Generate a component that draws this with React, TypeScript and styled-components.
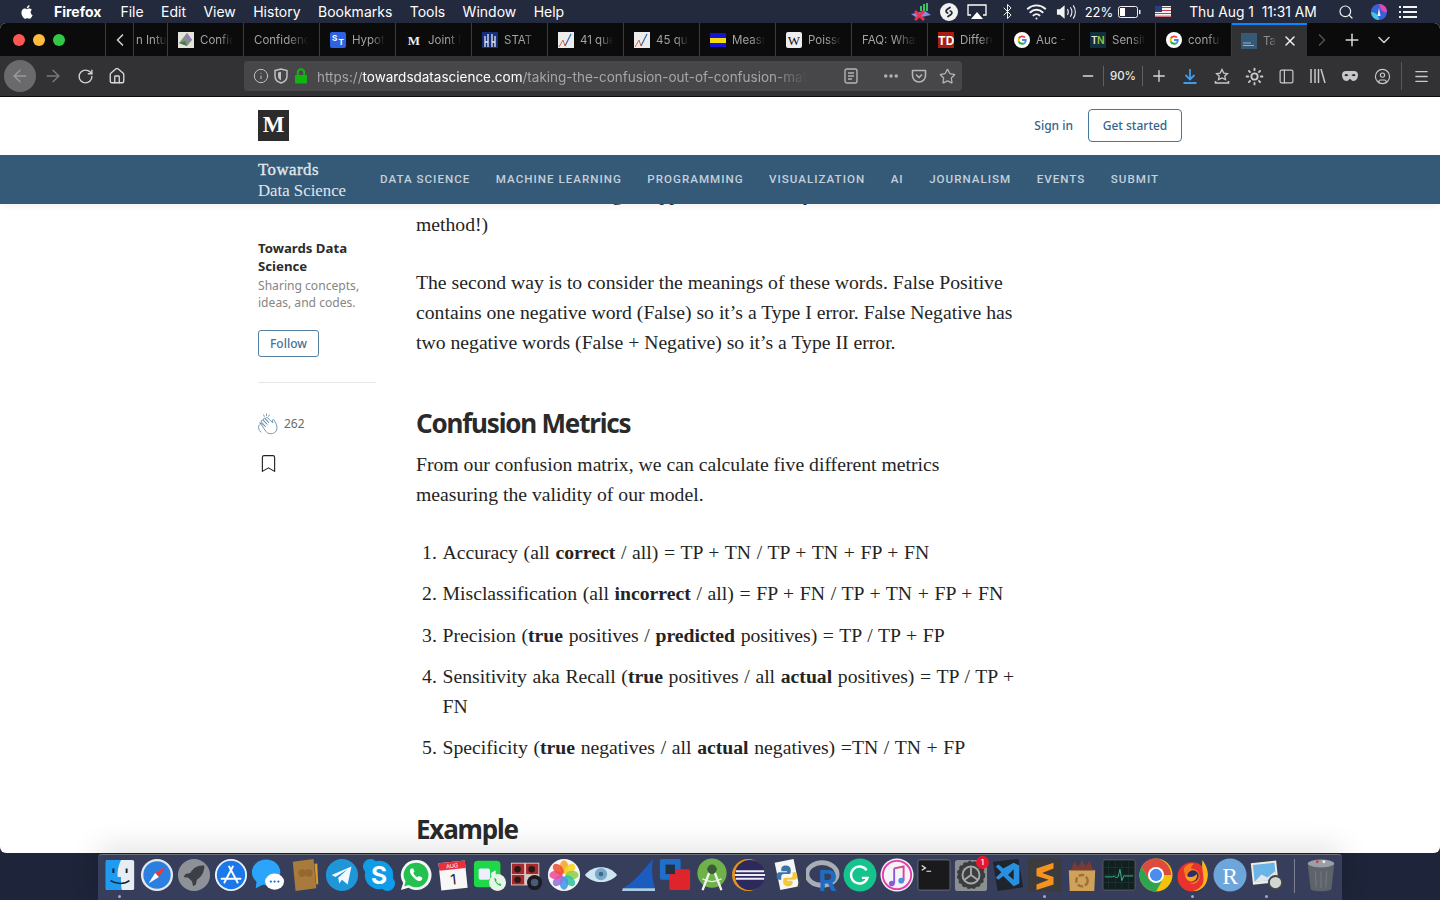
import type { ReactNode } from 'react';
import styled, { createGlobalStyle } from 'styled-components';
import {
    ArrowLeft,
    ArrowRight,
    Bluetooth,
    Bookmark,
    ChevronDown,
    ChevronLeft,
    ChevronRight,
    CircleUser,
    Ellipsis,
    House,
    Info,
    Menu,
    Minus,
    PanelLeft,
    Plus,
    RotateCw,
    Search,
    Star,
    Sun,
    Wifi,
    X,
} from 'lucide-react';

const uiFont = `Inter, "Liberation Sans", sans-serif`;
const mediumFont = `"Noto Sans", "Open Sans", sans-serif`;
const bodyFont = `"Liberation Serif", "DejaVu Serif", serif`;

const GlobalStyle = createGlobalStyle`
    html, body {
        margin: 0;
        padding: 0;
        background: #1e2439;
    }
    * {
        box-sizing: border-box;
    }
`;

const menuItems = ['File', 'Edit', 'View', 'History', 'Bookmarks', 'Tools', 'Window', 'Help'];
const navItems = ['Data Science', 'Machine Learning', 'Programming', 'Visualization', 'AI', 'Journalism', 'Events', 'Submit'];

const tabs: { title: string; icon?: string }[] = [
    { title: 'Confidence', icon: 'prism' },
    { title: 'Confidence Interval' },
    { title: 'Hypothesis', icon: 'st' },
    { title: 'Joint Prob', icon: 'medium' },
    { title: 'STAT 1', icon: 'stat' },
    { title: '41 questions', icon: 'chart' },
    { title: '45 questions', icon: 'chart' },
    { title: 'Measure', icon: 'flag' },
    { title: 'Poisson', icon: 'wiki' },
    { title: 'FAQ: What is' },
    { title: 'Difference', icon: 'td' },
    { title: 'Auc - Google', icon: 'google' },
    { title: 'Sensitivity', icon: 'tn' },
    { title: 'confusion', icon: 'google' },
];

const GoogleG = () => (
    <svg viewBox="0 0 16 16" width="16" height="16">
        <circle cx="8" cy="8" r="8" fill="#fff" />
        <path d="M11.8 5.1A4.8 4.8 0 0 0 4 5.8L5.6 7A3 3 0 0 1 10.3 6z" fill="#ea4335" />
        <path d="M4 5.8a4.8 4.8 0 0 0 0 4.4L5.6 9a3 3 0 0 1 0-2z" fill="#fbbc05" />
        <path d="M4 10.2a4.8 4.8 0 0 0 7.5 1.2L10 10.2A3 3 0 0 1 5.6 9z" fill="#34a853" />
        <path d="M8 7v2h2.7a2.5 2.5 0 0 1-.7 1.2l1.5 1.2A4.8 4.8 0 0 0 12.7 7z" fill="#4285f4" />
    </svg>
);

const Favicon = ({ kind }: { kind: string }) => {
    switch (kind) {
        case 'prism':
            return (
                <svg viewBox="0 0 16 16" width="16" height="16">
                    <rect width="16" height="16" fill="#e4e4dc" />
                    <path d="M1 11 9 1l5 7-5 6z" fill="#7a9a72" />
                    <path d="M9 1l5 7-7 1z" fill="#9a7ac0" />
                    <path d="M1 11l6-2 2 5z" fill="#55705c" />
                </svg>
            );
        case 'st':
            return (
                <svg viewBox="0 0 16 16" width="16" height="16">
                    <rect width="16" height="16" rx="2" fill="#2f62e0" />
                    <text x="2" y="9" fontSize="8" fontWeight="700" fill="#fff" fontFamily={uiFont}>S</text>
                    <text x="8.5" y="13" fontSize="8" fontWeight="700" fill="#fff" fontFamily={uiFont}>T</text>
                </svg>
            );
        case 'medium':
            return (
                <svg viewBox="0 0 16 16" width="16" height="16">
                    <text x="8" y="13" textAnchor="middle" fontSize="13" fontWeight="700" fill="#eee" fontFamily={bodyFont}>M</text>
                </svg>
            );
        case 'stat':
            return (
                <svg viewBox="0 0 16 16" width="16" height="16">
                    <rect width="16" height="16" fill="#15307a" />
                    <path d="M3 15V4M6 15V2M10 15V2M13 15V4M3 10h3M10 10h3" stroke="#e8e8f0" strokeWidth="1.300" />
                </svg>
            );
        case 'chart':
            return (
                <svg viewBox="0 0 16 16" width="16" height="16">
                    <rect width="16" height="16" fill="#ececec" />
                    <path d="M1 15l4-7 2 6" stroke="#d8684a" strokeWidth="1" fill="none" />
                    <path d="M7 14l6-12" stroke="#2f6db0" strokeWidth="1.2" fill="none" />
                </svg>
            );
        case 'flag':
            return (
                <svg viewBox="0 0 16 16" width="16" height="16">
                    <rect width="16" height="5" y="1" fill="#1414d8" />
                    <rect width="16" height="5" y="6" fill="#f4dc10" />
                    <rect width="16" height="4" y="11" fill="#1414d8" />
                </svg>
            );
        case 'wiki':
            return (
                <svg viewBox="0 0 16 16" width="16" height="16">
                    <rect width="16" height="16" rx="2" fill="#eee" />
                    <text x="8" y="13" textAnchor="middle" fontSize="13" fill="#111" fontFamily={bodyFont}>W</text>
                </svg>
            );
        case 'td':
            return (
                <svg viewBox="0 0 16 16" width="16" height="16">
                    <rect width="16" height="16" fill="#a81d0e" />
                    <text x="8" y="13" textAnchor="middle" fontSize="12" fontWeight="700" fill="#fff" fontFamily={uiFont}>TD</text>
                </svg>
            );
        case 'tn':
            return (
                <svg viewBox="0 0 16 16" width="16" height="16">
                    <rect width="16" height="16" fill="#12303c" />
                    <text x="1" y="12" fontSize="10" fontWeight="600" fill="#dfe8e8" fontFamily={uiFont}>T</text>
                    <text x="7" y="12" fontSize="10" fontWeight="600" fill="#9bc23c" fontFamily={uiFont}>N</text>
                </svg>
            );
        case 'tds':
            return (
                <svg viewBox="0 0 16 16" width="16" height="16">
                    <rect width="16" height="16" fill="#355a78" />
                    <path d="M2 10h8M2 12.5h11" stroke="#b9c8d4" strokeWidth="0.8" />
                </svg>
            );
        case 'google':
            return <GoogleG />;
        default:
            return null;
    }
};

const Apple = () => (
    <svg viewBox="0 0 24 24" width="16" height="18" fill="#fff">
        <path d="M17.3 12.6c0-2.5 2-3.7 2.1-3.8-1.2-1.7-3-1.9-3.6-2-1.5-.2-3 .9-3.8.9-.8 0-2-.9-3.3-.9-1.7 0-3.3 1-4.2 2.500-1.800 3.100-.5 7.700 1.300 10.200.9 1.200 1.900 2.600 3.300 2.500 1.300-.1 1.800-.8 3.400-.8s2 .8 3.400.8 2.300-1.200 3.100-2.500c1-1.400 1.400-2.800 1.400-2.900-.1 0-2.700-1-2.700-4zM14.800 5c.7-.9 1.200-2.100 1.100-3.300-1 0-2.300.7-3 1.500-.7.8-1.300 2-1.100 3.200 1.100.1 2.300-.6 3-1.400z" />
    </svg>
);

const Dock = {
    finder: (
        <>
            <rect x="3" y="2" width="30" height="32" rx="2" fill="#e8edf2" />
            <path d="M5 2h14c-3 6-4 13-3.500 18H19c0 5 0 9 1 14H5a2 2 0 0 1-2-2V4a2 2 0 0 1 2-2z" fill="#1f9bf0" />
            <path d="M11 11v5M25 11v5" stroke="#123" strokeWidth="2" />
            <path d="M8 24c6 4 15 4 20 0" stroke="#123" strokeWidth="1.500" fill="none" />
        </>
    ),
    safari: (
        <>
            <circle cx="18" cy="18" r="17" fill="#e6e8ec" />
            <circle cx="18" cy="18" r="14.500" fill="#2a7fe0" />
            <path d="M27 9l-11 7 4 4z" fill="#f03a30" />
            <path d="M9 27l11-7-4-4z" fill="#fff" />
        </>
    ),
    launchpad: (
        <>
            <circle cx="18" cy="18" r="17" fill="#8e9298" />
            <path d="M27 8c-6 0-10 3-13 8l-5 1-2 3 5 1 4 4 1 5 3-2 1-5c5-3 8-8 8-15z" fill="#3c3f44" />
        </>
    ),
    appstore: (
        <>
            <circle cx="18" cy="18" r="17" fill="#eaf2fb" />
            <circle cx="18" cy="18" r="15" fill="#1a78ea" />
            <path d="M11 26l9-17M25 26l-9-17M8 22h20" stroke="#fff" strokeWidth="2" strokeLinecap="round" />
        </>
    ),
    messages: (
        <>
            <ellipse cx="16" cy="15" rx="15" ry="13.500" fill="#2aa5fb" />
            <path d="M6 24l-1 8 8-4z" fill="#2aa5fb" />
            <ellipse cx="25" cy="25" rx="10" ry="8.500" fill="#fff" />
            <circle cx="21" cy="25" r="1.200" fill="#1a70c0" />
            <circle cx="25" cy="25" r="1.200" fill="#1a70c0" />
            <circle cx="29" cy="25" r="1.200" fill="#1a70c0" />
        </>
    ),
    contacts: (
        <>
            <path d="M5 4l22-3 3 31-22 3z" fill="#a87a3c" />
            <path d="M28 6l3-.3 1 22-2 .3z" fill="#d99a2c" />
            <circle cx="15" cy="16" r="4" fill="#94682f" />
            <circle cx="22" cy="16" r="4" fill="#94682f" />
        </>
    ),
    telegram: (
        <>
            <circle cx="18" cy="18" r="17" fill="#1f96d8" />
            <path d="M7 18l21-9-4 19-6-5-3 4-1-6 10-9-13 8z" fill="#f2f8fc" />
        </>
    ),
    skype: (
        <>
            <circle cx="18" cy="18" r="15" fill="#0f9ce8" />
            <circle cx="9" cy="9" r="8" fill="#0f9ce8" />
            <circle cx="27" cy="27" r="8" fill="#0f9ce8" />
            <text x="18" y="27" textAnchor="middle" fontSize="26" fontWeight="700" fill="#fff" fontFamily={uiFont}>S</text>
        </>
    ),
    whatsapp: (
        <>
            <path d="M18 2a16 16 0 0 0-13.600 24.400L2 34l8-2.400A16 16 0 1 0 18 2z" fill="#f4f8f4" />
            <path d="M18 5a13 13 0 0 0-11 20l-1.500 5 5-1.500A13 13 0 1 0 18 5z" fill="#25c150" />
            <path d="M13 11c-2 1-2 4 1 8s7 6 9 5 2-3 1-3.500l-3-1.500-1.500 1.500c-2-1-3.500-2.500-4.500-4.500l1.500-1.500L15 11z" fill="#fff" />
        </>
    ),
    calendar: (
        <>
            <g transform="rotate(-6 18 18)">
                <rect x="4" y="4" width="28" height="29" fill="#f7f7f7" />
                <rect x="4" y="4" width="28" height="8" fill="#e8303a" />
                <text x="18" y="10.500" textAnchor="middle" fontSize="6" fill="#fff" fontFamily={uiFont}>AUG</text>
                <text x="18" y="28" textAnchor="middle" fontSize="15" fill="#222" fontFamily={uiFont}>1</text>
            </g>
        </>
    ),
    facetime: (
        <>
            <rect x="1" y="3" width="28" height="28" rx="4" fill="#1fd84a" />
            <rect x="6" y="11" width="12" height="12" rx="2" fill="#eef" />
            <path d="M19 16l5-3v9l-5-3z" fill="#eef" />
            <circle cx="26" cy="26" r="9" fill="#e8f4e8" />
            <path d="M23 21c-1 1 0 4 2 6s4 3 5 2l-1-2-2 .5-2.500-2.500.5-2z" fill="#22b840" />
        </>
    ),
    photobooth: (
        <>
            <rect x="1" y="5" width="30" height="24" fill="#d8c8c4" />
            <rect x="2" y="6" width="13" height="11" fill="#a82a2a" />
            <rect x="17" y="6" width="13" height="11" fill="#a82a2a" />
            <rect x="2" y="18" width="13" height="10" fill="#a82a2a" />
            <circle cx="8" cy="12" r="3.500" fill="#2b1818" />
            <circle cx="23" cy="12" r="3.500" fill="#2b1818" />
            <circle cx="8" cy="23" r="3.500" fill="#2b1818" />
            <circle cx="26" cy="26" r="8" fill="#1a1c22" />
            <circle cx="26" cy="26" r="4" fill="#4a5a78" />
        </>
    ),
    photos: (
        <>
            <circle cx="18" cy="18" r="17" fill="#f6f6f6" />
            {['#f6a623', '#f7d51d', '#8ed04a', '#35c4a0', '#3d9be9', '#9a6fdc', '#e8509c', '#f0503c'].map((c, i) => (
                <ellipse key={c} cx="18" cy="9.500" rx="4.500" ry="7" fill={c} opacity="0.88" transform={`rotate(${i * 45} 18 18)`} />
            ))}
        </>
    ),
    eye: (
        <>
            <path d="M1 18c8-11 26-11 34 0-8 10-26 10-34 0z" fill="#cfe6f2" />
            <circle cx="18" cy="17" r="6.500" fill="#7aa8c8" />
            <circle cx="18" cy="17" r="2.500" fill="#3e6a8c" />
        </>
    ),
    wireshark: (
        <>
            <path d="M2 32C14 26 24 12 34 1c-2 10-1 22 2 31z" fill="#1a5cc0" />
            <path d="M2 32h34l1 3H1z" fill="#a8cce8" />
        </>
    ),
    parallels: (
        <>
            <rect x="2" y="1" width="22" height="22" rx="2" fill="#1f6fc8" />
            <rect x="12" y="12" width="22" height="22" rx="2" fill="#e0242c" />
            <rect x="8" y="7" width="10" height="10" fill="#243044" />
        </>
    ),
    android: (
        <>
            <circle cx="18" cy="16" r="15.500" fill="#6fb24a" />
            <path d="M18 8l-10 26M18 8l10 26" stroke="#f2f4f2" strokeWidth="2.500" />
            <circle cx="18" cy="12" r="5" fill="#3d5a38" />
            <path d="M8 22c6 4 14 4 20 0" stroke="#f2f4f2" strokeWidth="1.500" fill="none" />
        </>
    ),
    eclipse: (
        <>
            <circle cx="17" cy="18" r="17" fill="#e8901c" />
            <circle cx="19" cy="18" r="16" fill="#2c2a5c" />
            <path d="M4 14h30M3 18h32M4 22h30" stroke="#efeaf6" strokeWidth="2" />
        </>
    ),
    python: (
        <>
            <path d="M6 5l20-4 6 29-20 4z" fill="#f6f6f4" />
            <path d="M18 8c-4 0-5 2-5 4v2h6v1h-8c-2 0-3 2-3 4s1 4 3 4h2v-3c0-2 1-3 3-3h5c1 0 2-1 2-2v-3c0-2-2-4-5-4z" fill="#3a74a8" />
            <path d="M20 30c4 0 5-2 5-4v-2h-6v-1h8c2 0 3-2 3-4s-1-4-3-4h-2v3c0 2-1 3-3 3h-5c-1 0-2 1-2 2v3c0 2 2 4 5 4z" fill="#f4c83a" />
            <path d="M30 33l4-13" stroke="#444" strokeWidth="1.500" />
        </>
    ),
    rstudio: (
        <>
            <ellipse cx="17" cy="17" rx="16" ry="12" fill="none" stroke="#a9adb4" strokeWidth="5" />
            <text x="23" y="35" textAnchor="middle" fontSize="30" fontWeight="700" fill="#1f6cc0" fontFamily={uiFont}>R</text>
        </>
    ),
    grammarly: (
        <>
            <circle cx="18" cy="18" r="17.500" fill="#14c48c" />
            <path d="M25 13a9 9 0 1 0 1 8h-6" stroke="#fff" strokeWidth="2.500" fill="none" />
        </>
    ),
    itunes: (
        <>
            <circle cx="18" cy="18" r="17.500" fill="#f4f4f6" />
            <circle cx="18" cy="18" r="15" fill="none" stroke="#e63ab0" strokeWidth="2" />
            <path d="M15 11l10-2v15" stroke="#e0409c" strokeWidth="2" fill="none" />
            <path d="M15 11v16" stroke="#8a5ad8" strokeWidth="2" />
            <circle cx="12.500" cy="27" r="3" fill="#8a5ad8" />
            <circle cx="22.500" cy="24" r="3" fill="#4a8fe8" />
        </>
    ),
    terminal: (
        <>
            <rect x="1" y="2" width="34" height="32" rx="2" fill="#1a1a1c" stroke="#6a6d78" strokeWidth="1" />
            <path d="M5 8l4 2.500-4 2.500M10 14h5" stroke="#eee" strokeWidth="1.200" fill="none" />
        </>
    ),
    sysprefs: (
        <>
            <rect x="1" y="2" width="34" height="33" rx="3" fill="#8b8e92" />
            <circle cx="18" cy="18" r="14" fill="#3a3c3e" />
            <circle cx="18" cy="18" r="13.500" fill="none" stroke="#3a3c3e" strokeWidth="3" strokeDasharray="3 2.500" />
            <circle cx="18" cy="18" r="10" fill="#a6a8aa" />
            <circle cx="18" cy="18" r="8" fill="#3c3e40" />
            <path d="M18 18V10M18 18l-7 5M18 18l7 5" stroke="#a6a8aa" strokeWidth="2" />
        </>
    ),
    vscode: (
        <>
            <path d="M2 4l27-3 5 30-27 4z" fill="#20242c" />
            <path d="M24 5l6 3v19l-6 3-11-11-5 4-3-2 6-6-6-6 3-2 5 4z" fill="#2b8fe0" />
            <path d="M24 12l-6 6 6 5z" fill="#20242c" />
        </>
    ),
    sublime: (
        <>
            <rect x="0" y="0" width="36" height="36" rx="2" fill="#3c3c3e" />
            <path d="M27 5L9 11v8l13 4-13 5v6l18-6v-8l-12-4 12-5z" fill="#f6921e" />
        </>
    ),
    recycle: (
        <>
            <path d="M4 13h28l-1 22H5z" fill="#d0a158" />
            <path d="M6 13l4-9 4 6 4-8 4 7 4-6 4 10z" fill="#7c3a30" />
            <circle cx="18" cy="24" r="6" fill="none" stroke="#9a7238" strokeWidth="2.500" strokeDasharray="6 2" />
        </>
    ),
    activity: (
        <>
            <rect x="1" y="2" width="34" height="32" rx="2" fill="#11201e" stroke="#5a5e66" strokeWidth="1" />
            <path d="M7 2v32M14 2v32M21 2v32M28 2v32M1 10h34M1 18h34M1 26h34" stroke="#1f3a36" strokeWidth="0.700" />
            <path d="M3 20h8l2-1 2 2 2-1 2-8 2 12 2-5h10" stroke="#3cc8a0" strokeWidth="0.900" fill="none" />
        </>
    ),
    chrome: (
        <>
            <circle cx="18" cy="18" r="17.500" fill="#f4c20d" />
            <path d="M18 .5A17.500 17.500 0 0 0 2.800 9.300L10 22l8-4h15.800A17.500 17.500 0 0 0 18 .5z" fill="#dd4b3e" />
            <path d="M2.800 9.300A17.500 17.500 0 0 0 18 35.500L25.500 22H10z" fill="#2fa34f" />
            <circle cx="18" cy="18" r="8.500" fill="#fff" />
            <circle cx="18" cy="18" r="6.500" fill="#4a8cf0" />
        </>
    ),
    firefox: (
        <>
            <circle cx="17" cy="20" r="15.500" fill="#e8322e" />
            <path d="M28 2c5 7 7 14 5 21-2 8-8 12-15 12 8-2 12-8 11-15-.5-6-2-12-1-18z" fill="#ffb41e" />
            <path d="M8 12c2-5 7-7 11-6-2 2-3 3-3 5 5 0 10 4 9 10-1 5-6 8-10 6 4 0 6-3 5-5-3 2-8 1-10-2-1-3-1-5-2-8z" fill="#f97a1a" />
            <circle cx="18" cy="19" r="6" fill="#29306c" />
            <path d="M10 18c3 3 9 3 12-1 1 4-1 7-5 8-4 0-7-3-7-7z" fill="#ffa01e" />
        </>
    ),
    rlang: (
        <>
            <circle cx="18" cy="18" r="17.500" fill="#6ea6dc" />
            <text x="18" y="27" textAnchor="middle" fontSize="25" fill="#fff" fontFamily={bodyFont}>R</text>
        </>
    ),
    preview: (
        <>
            <g transform="rotate(-6 16 16)">
                <rect x="2" y="4" width="27" height="23" fill="#f0ece0" />
                <rect x="4" y="6" width="23" height="18" fill="#6ab4e8" />
                <path d="M4 24l8-7 6 4 9-6v9z" fill="#dfe8ee" />
            </g>
            <circle cx="27" cy="26" r="7" fill="#cfd6d4" stroke="#444" strokeWidth="2" />
        </>
    ),
    trash: (
        <>
            <ellipse cx="18" cy="6" rx="14" ry="4.500" fill="#9a9ea6" />
            <circle cx="14" cy="4" r="1.500" fill="#c44" />
            <circle cx="21" cy="4" r="1.500" fill="#eee" />
            <path d="M4 7l3 26c3 3 19 3 22 0l3-26c-6 4-22 4-28 0z" fill="#5e626a" />
            <path d="M12 14l1 17M18 14v18M24 14l-1 17" stroke="#777b84" strokeWidth="1" />
        </>
    ),
};

const dockApps: { key: keyof typeof Dock; running?: boolean; badge?: string }[] = [
    { key: 'finder', running: true },
    { key: 'safari' },
    { key: 'launchpad' },
    { key: 'appstore' },
    { key: 'messages' },
    { key: 'contacts' },
    { key: 'telegram' },
    { key: 'skype' },
    { key: 'whatsapp' },
    { key: 'calendar' },
    { key: 'facetime' },
    { key: 'photobooth' },
    { key: 'photos' },
    { key: 'eye' },
    { key: 'wireshark' },
    { key: 'parallels' },
    { key: 'android' },
    { key: 'eclipse' },
    { key: 'python' },
    { key: 'rstudio' },
    { key: 'grammarly' },
    { key: 'itunes' },
    { key: 'terminal' },
    { key: 'sysprefs', badge: '1' },
    { key: 'vscode' },
    { key: 'sublime', running: true },
    { key: 'recycle' },
    { key: 'activity' },
    { key: 'chrome' },
    { key: 'firefox', running: true },
    { key: 'rlang' },
    { key: 'preview', running: true },
];

const Slot = ({ w, children }: { w: number; children: ReactNode }) => <SlotBox $w={w}>{children}</SlotBox>;

const App = () => (
    <Screen>
        <GlobalStyle />
        <MenuBar>
            <AppleSlot>
                <Apple />
            </AppleSlot>
            <AppName>Firefox</AppName>
            {menuItems.map((m) => (
                <MenuItem key={m}>{m}</MenuItem>
            ))}
            <StatusArea>
                <Slot w={28}>
                    <svg viewBox="0 0 24 18" width="24" height="18">
                        <path d="M2 11l14-3 6 4-14 3z" fill="#8a8ae0" />
                        <path d="M14 1h2v7h-2zM17 0h2v8h-2zM11 3h2v5h-2z" fill="#3fc060" />
                        <path d="M6 8l9 9M15 8l-9 9" stroke="#f0304a" strokeWidth="2.800" />
                    </svg>
                </Slot>
                <Slot w={27}>
                    <svg viewBox="0 0 18 18" width="18" height="18">
                        <circle cx="9" cy="9" r="9" fill="#f2f2f2" />
                        <path d="M10 4.500 7 6.500c-1.500 1-1 3 .7 3.500M8 13.500l3-2c1.500-1 1-3-.7-3.500" stroke="#232a3c" strokeWidth="1.800" fill="none" strokeLinecap="round" />
                    </svg>
                </Slot>
                <Slot w={30}>
                    <svg viewBox="0 0 20 16" width="20" height="16">
                        <path d="M4 11H1V1h18v10h-3" stroke="#fff" strokeWidth="1.300" fill="none" />
                        <path d="M10 8l6 7H4z" fill="#fff" />
                    </svg>
                </Slot>
                <Slot w={30}>
                    <Bluetooth size={17} color="#f0f0f0" strokeWidth={1.400} />
                </Slot>
                <Slot w={29}>
                    <Wifi size={21} color="#f4f4f4" strokeWidth={2.200} />
                </Slot>
                <Slot w={30}>
                    <svg viewBox="0 0 22 16" width="21" height="16">
                        <path d="M1 5h3l5-4v14l-5-4H1z" fill="#f4f4f4" />
                        <path d="M12 5c1.200 2 1.200 4 0 6M15 3c2 3 2 7 0 10M18 1c3 4 3 10 0 14" stroke="#f4f4f4" strokeWidth="1.100" fill="none" />
                    </svg>
                </Slot>
                <StatusText $w={36}>22%</StatusText>
                <Slot w={24}>
                    <svg viewBox="0 0 23 12" width="23" height="12">
                        <rect x="0.500" y="0.500" width="19" height="11" rx="2" stroke="#eee" fill="none" />
                        <rect x="2" y="2" width="5" height="8" fill="#fff" />
                        <rect x="21" y="4" width="1.500" height="4" fill="#eee" />
                    </svg>
                </Slot>
                <Slot w={44}>
                    <svg viewBox="0 0 16 11" width="16" height="11">
                        <rect width="16" height="11" fill="#f4f4f4" />
                        <path d="M0 1.500h16M0 4.500h16M0 7.500h16M0 10.200h16" stroke="#c8354a" strokeWidth="1" />
                        <rect width="7" height="6" fill="#2a3f80" />
                    </svg>
                </Slot>
                <ClockText $w={136}>Thu Aug 1&nbsp;&nbsp;11:31 AM</ClockText>
                <Slot w={50}>
                    <Search size={16} color="#f0f0f0" strokeWidth={1.800} />
                </Slot>
                <Slot w={16}>
                    <svg viewBox="0 0 16 16" width="16" height="16">
                        <circle cx="8" cy="8" r="8" fill="#3a60d8" />
                        <path d="M8 0a8 8 0 0 1 8 8c-3 1-6-1-8-8z" fill="#e845b0" />
                        <path d="M0 8a8 8 0 0 0 8 8c0-4-3-8-8-8z" fill="#40c8e0" />
                        <path d="M8 4l1.500 8h-3z" fill="#f4f4ff" />
                    </svg>
                </Slot>
                <Slot w={42}>
                    <svg viewBox="0 0 18 12" width="18" height="12">
                        <path d="M4 1h14M4 6h14M4 11h14M0 1h2M0 6h2M0 11h2" stroke="#f4f4f4" strokeWidth="1.800" />
                    </svg>
                </Slot>
            </StatusArea>
        </MenuBar>

        <Browser>
            <TabBar>
                <TrafficLights>
                    <Light $c="#fc5753" />
                    <Light $c="#fdbc40" />
                    <Light $c="#33c748" />
                </TrafficLights>
                <ScrollBack>
                    <ChevronLeft size={20} color="#d0d0d0" strokeWidth={2} />
                </ScrollBack>
                <HiddenTab>
                    <TabTitle>n Intu</TabTitle>
                </HiddenTab>
                {tabs.map((t) => (
                    <Tab key={t.title}>
                        {t.icon && <Favicon kind={t.icon} />}
                        <TabTitle>{t.title}</TabTitle>
                    </Tab>
                ))}
                <ActiveTab>
                    <Favicon kind="tds" />
                    <ActiveTitle>Taking the</ActiveTitle>
                    <X size={16} color="#f0f0f0" strokeWidth={2.200} />
                </ActiveTab>
                <ScrollForward>
                    <ChevronRight size={20} color="#505052" strokeWidth={2} />
                </ScrollForward>
                <NewTab>
                    <Plus size={20} color="#d8d8d8" strokeWidth={1.800} />
                </NewTab>
                <AllTabs>
                    <ChevronDown size={20} color="#d0d0d0" strokeWidth={1.800} />
                </AllTabs>
            </TabBar>

            <Toolbar>
                <BackButton>
                    <ArrowLeft size={20} color="#9b9b9d" strokeWidth={1.600} />
                </BackButton>
                <ToolButton>
                    <ArrowRight size={20} color="#7a7a7c" strokeWidth={1.600} />
                </ToolButton>
                <ToolButton>
                    <RotateCw size={17} color="#d0d0d2" strokeWidth={2} />
                </ToolButton>
                <ToolButton>
                    <House size={18} color="#d8d8da" strokeWidth={1.800} />
                </ToolButton>
                <UrlBar>
                    <UrlIcon>
                        <Info size={16} color="#c0c0c2" strokeWidth={1.500} />
                    </UrlIcon>
                    <UrlIcon>
                        <svg viewBox="0 0 14 16" width="14" height="16">
                            <path d="M1 2.500 7 1l6 1.500V8c0 3.500-2.500 6-6 7-3.500-1-6-3.500-6-7z" fill="none" stroke="#c0c0c2" strokeWidth="1.500" />
                            <path d="M4 4.500 7 3.800v8.400C5 11.500 4 10 4 8z" fill="#c0c0c2" />
                        </svg>
                    </UrlIcon>
                    <UrlIcon>
                        <svg viewBox="0 0 14 16" width="14" height="16">
                            <path d="M3.800 7V4.500a3.200 3.200 0 0 1 6.400 0V7" fill="none" stroke="#12b412" strokeWidth="2" />
                            <rect x="1" y="7" width="12" height="8.500" rx="1" fill="#12b412" />
                        </svg>
                    </UrlIcon>
                    <UrlText>
                        https://<strong>towardsdatascience.com</strong>/taking-the-confusion-out-of-confusion-matrices-c1ce054b3d3e
                    </UrlText>
                    <UrlAction>
                        <svg viewBox="0 0 14 16" width="14" height="16" fill="none" stroke="#b4b4b6" strokeWidth="1.400">
                            <rect x="1" y="1" width="12" height="14" rx="2" />
                            <path d="M4 5h6M4 8h6M4 11h4" />
                        </svg>
                    </UrlAction>
                    <UrlDivider />
                    <UrlAction>
                        <Ellipsis size={18} color="#b4b4b6" strokeWidth={2.600} />
                    </UrlAction>
                    <UrlAction>
                        <svg viewBox="0 0 16 16" width="16" height="16" fill="none" stroke="#b4b4b6" strokeWidth="1.600">
                            <path d="M1.500 2.500h13v5a6.500 6.500 0 0 1-13 0z" strokeLinejoin="round" />
                            <path d="M5 6.500l3 3 3-3" />
                        </svg>
                    </UrlAction>
                    <UrlAction>
                        <Star size={17} color="#b4b4b6" strokeWidth={1.800} />
                    </UrlAction>
                </UrlBar>
                <ToolRight>
                    <ZoomButton>
                        <Minus size={16} color="#d8d8da" strokeWidth={2} />
                    </ZoomButton>
                    <ZoomValue>90%</ZoomValue>
                    <ZoomButton>
                        <Plus size={18} color="#d8d8da" strokeWidth={1.800} />
                    </ZoomButton>
                    <ToolButton>
                        <svg viewBox="0 0 16 16" width="16" height="16" fill="none" stroke="#3f9bf2" strokeWidth="1.800">
                            <path d="M8 1v10M3.500 7L8 11.500 12.500 7M1.500 15h13" />
                        </svg>
                    </ToolButton>
                    <ToolButton>
                        <svg viewBox="0 0 16 16" width="16" height="16" fill="none" stroke="#c8c8ca" strokeWidth="1.300">
                            <path d="M8 1.500l1.800 3.600 3.700.5-2.700 2.500.7 3.500L8 10l-3.500 1.600.7-3.500L2.500 5.600l3.700-.5z" />
                            <path d="M1.500 13v2h13v-2" strokeWidth="1.600" />
                        </svg>
                    </ToolButton>
                    <ToolButton>
                        <Sun size={19} color="#c8c8ca" strokeWidth={2.400} />
                    </ToolButton>
                    <ToolButton>
                        <PanelLeft size={17} color="#c8c8ca" strokeWidth={1.700} />
                    </ToolButton>
                    <ToolButton>
                        <svg viewBox="0 0 16 14" width="16" height="14" stroke="#c8c8ca" strokeWidth="1.500" fill="none">
                            <path d="M1 0v14M5 0v14M8.500 0v14M11 0l4 14" />
                        </svg>
                    </ToolButton>
                    <ToolButton>
                        <svg viewBox="0 0 16 10" width="16" height="10">
                            <path fillRule="evenodd" fill="#c8c8ca" d="M4 0h8c2.500 0 4 1.500 4 4 0 3-2 6-4.500 6-2 0-2.500-2-3.500-2s-1.500 2-3.500 2C2 10 0 7 0 4c0-2.500 1.500-4 4-4zm0 3c1 0 2 .5 2.500 1.500C5 5.500 3 5.500 2.500 4.500 2.700 3.500 3.200 3 4 3zm8 0c-1 0-2 .5-2.500 1.500 1.500 1 3.500 1 4 0C13.300 3.500 12.800 3 12 3z" />
                        </svg>
                    </ToolButton>
                    <ToolButton>
                        <CircleUser size={17} color="#c8c8ca" strokeWidth={1.600} />
                    </ToolButton>
                    <ToolDivider />
                    <ToolButton>
                        <Menu size={17} color="#c8c8ca" strokeWidth={1.800} />
                    </ToolButton>
                </ToolRight>
            </Toolbar>

            <Page>
                <SiteHeader>
                    <MediumLogo>M</MediumLogo>
                    <HeaderLinks>
                        <SignIn>Sign in</SignIn>
                        <GetStarted>Get started</GetStarted>
                    </HeaderLinks>
                </SiteHeader>
                <PubNav>
                    <PubName>
                        <strong>Towards</strong>
                        <span>Data Science</span>
                    </PubName>
                    <PubLinks>
                        {navItems.map((n) => (
                            <PubLink key={n}>{n}</PubLink>
                        ))}
                    </PubLinks>
                </PubNav>
                <Content>
                    <Sidebar>
                        <SideTitle>Towards Data Science</SideTitle>
                        <SideDesc>Sharing concepts, ideas, and codes.</SideDesc>
                        <FollowButton>Follow</FollowButton>
                        <SideRule />
                        <ClapRow>
                            <svg viewBox="0 0 22 24" width="21" height="23" fill="none" stroke="#5b87a8" strokeWidth="0.900" strokeLinecap="round">
                                <path d="M7 3l.6 1.600M10 2v1.700M13 3l-.8 1.400" />
                                <path d="M3 11l6.500 9.500c2 2.500 6 3 9 1 2.500-2 3-5 2-8L18 8.500c-.8-1.300-2.300-.5-2 .8l.5 2L11 6c-1-1-2.500.2-1.700 1.500l3.200 4L8.500 7C7.500 6 6 7 6.800 8.500l4 4.500-4.500-4.200C5.200 8 3.800 9 4.600 10.300l4.400 5L5 12c-1-1-2.600 0-2 1" />
                                <path d="M2 14c-1 3 0 5 2 7" />
                            </svg>
                            <ClapCount>262</ClapCount>
                        </ClapRow>
                        <SaveRow>
                            <Bookmark size={21} color="#222" strokeWidth={1.300} />
                        </SaveRow>
                    </Sidebar>
                    <Article>
                        <Paragraph>
                            Just memorize them using an approach that suits your own
                            <br />
                            method!)
                        </Paragraph>
                        <Paragraph>
                            The second way is to consider the meanings of these words. False Positive contains one negative word
                            (False) so it’s a Type I error. False Negative has two negative words (False + Negative) so it’s a
                            Type II error.
                        </Paragraph>
                        <Heading>Confusion Metrics</Heading>
                        <Lead>From our confusion matrix, we can calculate five different metrics measuring the validity of our model.</Lead>
                        <Metrics>
                            <li>
                                Accuracy (all <b>correct</b> / all) = TP + TN / TP + TN + FP + FN
                            </li>
                            <li>
                                Misclassification (all <b>incorrect</b> / all) = FP + FN / TP + TN + FP + FN
                            </li>
                            <li>
                                Precision (<b>true</b> positives / <b>predicted</b> positives) = TP / TP + FP
                            </li>
                            <li>
                                Sensitivity aka Recall (<b>true</b> positives / all <b>actual</b> positives) = TP / TP + FN
                            </li>
                            <li>
                                Specificity (<b>true</b> negatives / all <b>actual</b> negatives) =TN / TN + FP
                            </li>
                        </Metrics>
                        <Heading>Example</Heading>
                    </Article>
                </Content>
            </Page>
        </Browser>

        <DockRow>
            <DockBar>
                {dockApps.map((a) => (
                    <DockItem key={a.key} $running={a.running}>
                        <svg viewBox="0 0 36 36" width="34" height="34">
                            {Dock[a.key]}
                        </svg>
                        {a.badge && <DockBadge>{a.badge}</DockBadge>}
                    </DockItem>
                ))}
                <DockDivider />
                <DockItem>
                    <svg viewBox="0 0 36 36" width="34" height="34">
                        {Dock.trash}
                    </svg>
                </DockItem>
            </DockBar>
        </DockRow>
    </Screen>
);

export default App;

const Screen = styled.div`
    width: 1440px;
    height: 900px;
    overflow: hidden;
    display: flex;
    flex-direction: column;
    background: #1e2439;
`;

const MenuBar = styled.div`
    height: 23px;
    flex: none;
    display: flex;
    align-items: center;
    background: #232a3d;
    color: #fff;
    font: 400 14px ${uiFont};
    white-space: nowrap;
`;

const AppleSlot = styled.div`
    width: 54px;
    padding-left: 19px;
    display: flex;
    align-items: center;
`;

const AppName = styled.span`
    font-weight: 700;
    margin-right: 19px;
`;

const MenuItem = styled.span`
    margin-right: 17.4px;
`;

const StatusArea = styled.div`
    margin-left: auto;
    margin-right: 11px;
    display: flex;
    align-items: center;
`;

const SlotBox = styled.div<{ $w: number }>`
    width: ${({ $w }) => $w}px;
    display: flex;
    align-items: center;
    justify-content: center;
`;

const StatusText = styled.span<{ $w: number }>`
    width: ${({ $w }) => $w}px;
    text-align: center;
    font-size: 13px;
`;

const ClockText = styled(StatusText)`
    font-size: 13.8px;
`;

const Browser = styled.div`
    height: 830px;
    flex: none;
    display: flex;
    flex-direction: column;
    border-radius: 6px;
    overflow: hidden;
    background: #fff;
`;

const TabBar = styled.div`
    height: 33px;
    flex: none;
    display: flex;
    align-items: stretch;
    background: #0b0b0c;
`;

const TrafficLights = styled.div`
    width: 105px;
    padding-left: 13px;
    display: flex;
    align-items: center;
    gap: 8px;
`;

const Light = styled.span<{ $c: string }>`
    width: 12px;
    height: 12px;
    border-radius: 50%;
    background: ${({ $c }) => $c};
`;

const ScrollBack = styled.div`
    width: 29px;
    display: flex;
    align-items: center;
    justify-content: center;
    border-left: 1px solid #3c3c3e;
    border-right: 1px solid #3c3c3e;
`;

const Tab = styled.div`
    width: 76px;
    padding: 0 10px;
    display: flex;
    align-items: center;
    gap: 6px;
    border-right: 1px solid #3c3c3e;
    flex: none;
    svg {
        flex: none;
    }
`;

const HiddenTab = styled(Tab)`
    width: 34px;
    padding: 0 0 0 2px;
`;

const ActiveTab = styled(Tab)`
    background: #323234;
    border-top: 2px solid #0a84ff;
    border-right: none;
    width: 75px;
    padding: 0 9px;
`;

const TabTitle = styled.span`
    flex: 1;
    min-width: 0;
    overflow: hidden;
    white-space: nowrap;
    color: #a2a2a4;
    font: 400 11.5px ${uiFont};
    -webkit-mask-image: linear-gradient(90deg, #000 60%, transparent);
    mask-image: linear-gradient(90deg, #000 60%, transparent);
`;

const ActiveTitle = styled(TabTitle)`
    color: #8e8e90;
`;

const ScrollForward = styled.div`
    width: 30px;
    display: flex;
    align-items: center;
    justify-content: center;
`;

const NewTab = styled.div`
    width: 30px;
    display: flex;
    align-items: center;
    justify-content: center;
`;

const AllTabs = styled.div`
    width: 34px;
    display: flex;
    align-items: center;
    justify-content: center;
`;

const Toolbar = styled.div`
    height: 41px;
    flex: none;
    display: flex;
    align-items: center;
    padding: 0 0 0 4px;
    background: #323234;
    border-bottom: 1px solid #0c0c0d;
`;

const ToolButton = styled.div`
    width: 32px;
    height: 32px;
    flex: none;
    display: flex;
    align-items: center;
    justify-content: center;
`;

const BackButton = styled(ToolButton)`
    border-radius: 50%;
    background: #6a6a6c;
    margin-right: 1px;
`;

const UrlBar = styled.div`
    width: 718px;
    height: 30px;
    margin-left: 111px;
    flex: none;
    display: flex;
    align-items: center;
    padding: 0 5px 0 7px;
    background: #47474a;
    border-radius: 4px;
`;

const UrlIcon = styled.div`
    width: 20px;
    display: flex;
    justify-content: center;
    flex: none;
`;

const UrlText = styled.div`
    width: 490px;
    margin-left: 6px;
    margin-right: 30px;
    padding-top: 1px;
    flex: none;
    overflow: hidden;
    white-space: nowrap;
    color: #a6a6a8;
    font: 400 13.5px ${uiFont};
    -webkit-mask-image: linear-gradient(90deg, #000 93%, transparent);
    mask-image: linear-gradient(90deg, #000 93%, transparent);
    strong {
        color: #fff;
        font-weight: 400;
    }
`;

const UrlAction = styled.div`
    width: 28px;
    display: flex;
    justify-content: center;
    flex: none;
`;

const UrlDivider = styled.span`
    width: 1px;
    height: 20px;
    margin: 0 6px;
    background: #606062;
`;

const ToolRight = styled.div`
    margin-left: 110px;
    display: flex;
    align-items: center;
`;

const ZoomButton = styled(ToolButton)`
    width: 31px;
`;

const ZoomValue = styled.div`
    width: 40px;
    height: 20px;
    text-align: center;
    color: #e8e8ea;
    font: 500 11.5px/20px ${uiFont};
    border-left: 1px solid #606062;
    border-right: 1px solid #606062;
`;

const ToolDivider = styled.span`
    width: 1px;
    height: 28px;
    margin: 0 3px;
    background: #58585a;
`;

const Page = styled.div`
    flex: 1;
    min-height: 0;
    display: flex;
    flex-direction: column;
`;

const SiteHeader = styled.header`
    height: 58px;
    flex: none;
    padding: 0 258px 2px;
    display: flex;
    align-items: center;
    justify-content: space-between;
`;

const MediumLogo = styled.div`
    width: 31px;
    height: 31px;
    display: flex;
    align-items: center;
    justify-content: center;
    background: #2c2c2c;
    color: #fff;
    font: 700 23px ${bodyFont};
`;

const HeaderLinks = styled.div`
    display: flex;
    align-items: center;
    gap: 15px;
    font: 500 12px ${mediumFont};
`;

const SignIn = styled.span`
    color: #35648a;
`;

const GetStarted = styled.span`
    width: 94px;
    height: 33px;
    display: flex;
    align-items: center;
    justify-content: center;
    color: #35648a;
    border: 1px solid #45769c;
    border-radius: 4px;
`;

const PubNav = styled.nav`
    height: 49px;
    flex: none;
    padding-left: 258px;
    display: flex;
    align-items: center;
    background: #355a78;
    box-shadow: 0 2px 6px rgba(0, 0, 0, 0.06);
    position: relative;
    z-index: 1;
`;

const PubName = styled.div`
    width: 122px;
    display: flex;
    flex-direction: column;
    color: #e0e7ec;
    font: 400 16.8px/21px ${bodyFont};
    strong {
        font-weight: 400;
        letter-spacing: 0.5px;
        -webkit-text-stroke: 0.35px #e0e7ec;
    }
`;

const PubLinks = styled.div`
    display: flex;
    gap: 25.5px;
    margin-top: -2px;
`;

const PubLink = styled.span`
    color: #c3d0db;
    font: 500 11.6px Roboto, ${mediumFont};
    letter-spacing: 1px;
    text-transform: uppercase;
`;

const Content = styled.main`
    flex: 1;
    min-height: 0;
    overflow: hidden;
    padding-left: 258px;
    display: flex;
    gap: 40px;
`;

const Sidebar = styled.aside`
    width: 118px;
    flex: none;
    padding-top: 35px;
    font-family: ${mediumFont};
`;

const SideTitle = styled.div`
    color: #2c2c2c;
    font-size: 13.2px;
    font-weight: 700;
    line-height: 18px;
`;

const SideDesc = styled.div`
    margin-top: 2px;
    color: #858585;
    font-size: 12.1px;
    line-height: 17px;
`;

const FollowButton = styled.div`
    width: 61px;
    height: 27px;
    margin-top: 19px;
    display: flex;
    align-items: center;
    justify-content: center;
    color: #45729a;
    border: 1px solid #5480a3;
    border-radius: 3px;
    font-size: 12px;
    font-weight: 500;
`;

const SideRule = styled.div`
    height: 1px;
    margin-top: 25px;
    background: #e6e6e6;
`;

const ClapRow = styled.div`
    margin-top: 29px;
    margin-left: -1px;
    display: flex;
    align-items: center;
    gap: 6px;
`;

const ClapCount = styled.span`
    color: #6b6b6b;
    font-size: 12px;
`;

const SaveRow = styled.div`
    margin-top: 18px;
`;

const Article = styled.article`
    width: 606px;
    flex: none;
    margin-top: -25px;
    color: #242424;
    font: 400 19.7px/30px ${bodyFont};
`;

const Paragraph = styled.p`
    margin: 0 0 28px;
`;

const Heading = styled.h2`
    margin: 47px 0 0;
    color: #2a2a2a;
    font: 700 26px/38px ${mediumFont};
    letter-spacing: -1.2px;
`;

const Lead = styled.p`
    margin: 7px 0 0;
`;

const Metrics = styled.ol`
    margin: 28px 0 48px;
    padding: 0 0 0 26.5px;
    word-spacing: 0.75px;
    li {
        margin-top: 11.3px;
    }
`;

const DockRow = styled.div`
    flex: 1;
    display: flex;
    justify-content: center;
    align-items: flex-start;
    padding-top: 1px;
    position: relative;
`;

const DockBar = styled.div`
    width: 1244px;
    height: 47px;
    padding-left: 3px;
    display: flex;
    background: #363e5b;
    border-top: 1px solid #6e7079;
    border-radius: 4px 4px 0 0;
    box-shadow: 0 -6px 30px rgba(0, 0, 0, 0.12);
`;

const DockItem = styled.div<{ $running?: boolean }>`
    width: 37px;
    height: 40px;
    flex: none;
    display: flex;
    align-items: center;
    justify-content: center;
    position: relative;
    &::after {
        content: '';
        display: ${({ $running }) => ($running ? 'block' : 'none')};
        position: absolute;
        left: 17px;
        top: 40px;
        width: 3px;
        height: 3px;
        border-radius: 50%;
        background: #a8acb8;
    }
`;

const DockBadge = styled.span`
    position: absolute;
    right: 0;
    top: 1px;
    width: 13px;
    height: 13px;
    border-radius: 50%;
    background: #e8182c;
    color: #fff;
    text-align: center;
    font: 500 8px/13px ${uiFont};
`;

const DockDivider = styled.span`
    width: 1px;
    height: 34px;
    margin: 4px 7px 0 9px;
    background: #7a7f92;
`;
